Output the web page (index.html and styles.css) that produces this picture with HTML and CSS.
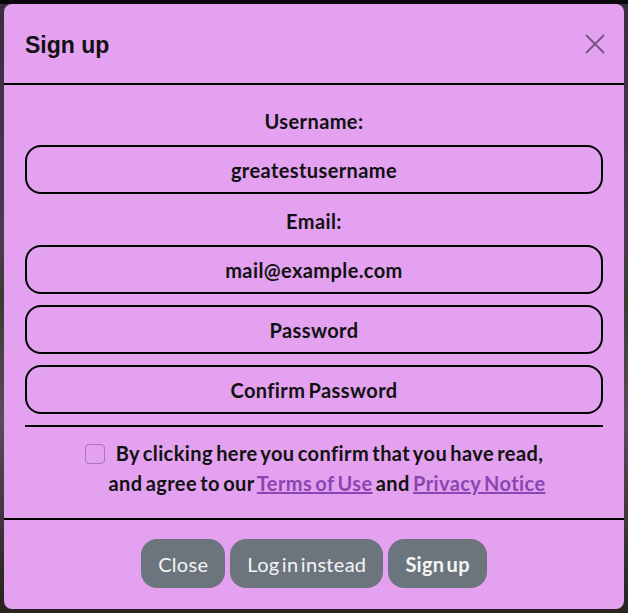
FILE: index.html
```html
<!DOCTYPE html>
<html lang="en">
<head>
<meta charset="utf-8">
<title>Sign up</title>
<link rel="stylesheet" href="styles.css">
</head>
<body>
<div class="backdrop">
  <div class="modal">
    <div class="modal-header">
      <h1 class="modal-title">Sign up</h1>
      <button class="btn-close" aria-label="Close">
        <svg width="20" height="20" viewBox="0 0 20 20"><path d="M1 1 L19 19 M19 1 L1 19" stroke="currentColor" stroke-width="2" fill="none"/></svg>
      </button>
    </div>
    <div class="modal-body">
      <div class="label">Username:</div>
      <div class="field">greatestusername</div>
      <div class="label label-email">Email:</div>
      <div class="field">mail@example.com</div>
      <div class="field field-gap">Password</div>
      <div class="field field-gap">Confirm Password</div>
      <div class="divider"></div>
      <div class="consent">
        <span class="consent-line"><span class="checkbox"></span>By clicking here you confirm that you have read,</span>
        <span class="consent-line consent-second">and agree to our <a href="#" class="link">Terms of Use</a> and <a href="#" class="link">Privacy Notice</a></span>
      </div>
    </div>
    <div class="modal-footer">
      <button class="btn">Close</button>
      <button class="btn">Log in instead</button>
      <button class="btn btn-strong">Sign up</button>
    </div>
  </div>
</div>
</body>
</html>
```
FILE: styles.css
```css
* { box-sizing: border-box; }
html, body { margin: 0; height: 100%; }
body {
  background: linear-gradient(180deg, #0c070d 0, #0c070d 4px, #3a2d40 4px, #4a3a50 240px, #3c3a30 300px, #5a4a5e 420px, #2a2420 600px);
  font-family: "Lato", "Liberation Sans", sans-serif;
  color: #111;
}
.backdrop { padding: 4px 4px 0 4px; }
.modal {
  width: 620px;
  height: 605px;
  background: #e3a1f0;
  border-radius: 8px;
  display: flex;
  flex-direction: column;
}
.modal-header {
  height: 81px;
  padding: 3px 19px 0 21px;
  display: flex;
  align-items: center;
  justify-content: space-between;
  border-bottom: 2px solid #000;
}
.modal-title {
  margin: 0;
  font-family: "Liberation Sans", "Roboto", sans-serif;
  font-weight: 700;
  font-size: 23px;
  color: #111;
}
.btn-close {
  border: 0;
  background: none;
  padding: 0;
  width: 20px;
  height: 20px;
  margin-top: -3px;
  color: #7a5482;
  display: flex;
}
.modal-body {
  padding: 22px 21px 20px 21px;
  border-bottom: 2px solid #000;
}
.label, .field, .consent, .btn {
  font-size: 20px;
  letter-spacing: 0.4px;
  word-spacing: -2px;
}
.label {
  text-align: center;
  font-weight: 700;
  line-height: 28px;
}
.label-email { margin-top: 13px; }
.field {
  margin-top: 10px;
  height: 49px;
  border: 2px solid #000;
  border-radius: 16px;
  display: flex;
  align-items: center;
  justify-content: center;
  font-weight: 700;
}
.field-gap { margin-top: 11px; }
.divider { margin-top: 11px; height: 2px; background: #000; }
.consent {
  margin-top: 11px;
  text-align: center;
  font-weight: 700;
  line-height: 30px;
}
.consent-line { display: block; }
.consent-second { padding-left: 26px; }
.checkbox {
  display: inline-block;
  width: 20px;
  height: 20px;
  border: 1px solid #a877b4;
  border-radius: 4px;
  vertical-align: -3px;
  margin-right: 11px;
}
.link { color: #8a45b0; text-decoration: underline; }
.modal-footer {
  flex: 1;
  display: flex;
  justify-content: center;
  align-items: center;
  gap: 5px;
  padding-bottom: 2px;
}
.btn {
  height: 49px;
  padding: 0 17px;
  border: 0;
  border-radius: 16px;
  background: #6c757d;
  color: #f4f4f4;
  font-family: "Lato", sans-serif;
  font-weight: 400;
  letter-spacing: 0.3px;
  word-spacing: -3px;
}
.btn-strong { font-weight: 700; }
```
